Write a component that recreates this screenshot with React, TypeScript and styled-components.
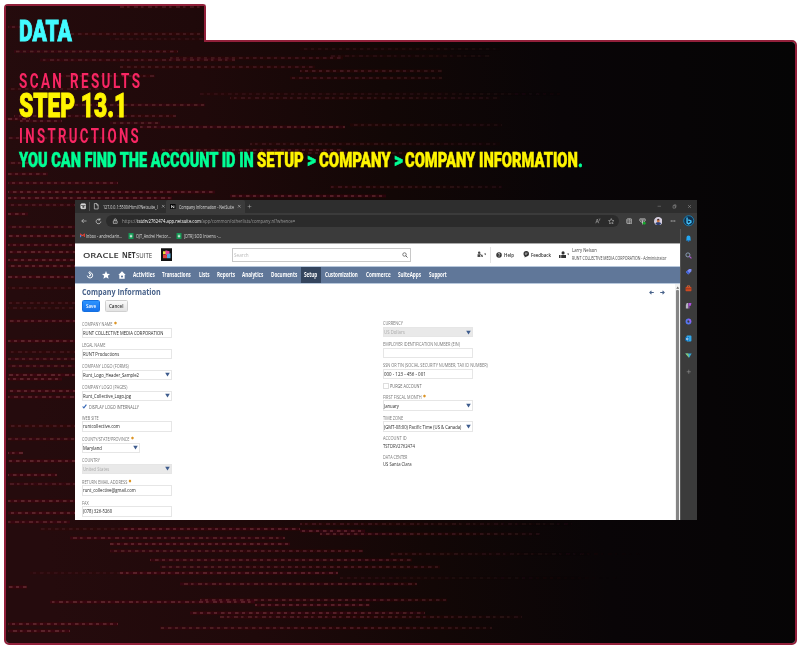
import React, { useLayoutEffect, useRef, useState } from "react";
import styled, { createGlobalStyle } from "styled-components";

const Global = createGlobalStyle`
  * { box-sizing: border-box; }
  body { margin: 0; background: #fff; width: 800px; height: 650px; overflow: hidden; }
`;

/* ---------- text squeezed to a given width ---------- */
const FitBox = styled.span<{ $w: number; $ml?: number }>`
  display: block;
  flex: none;
  width: ${(p) => p.$w}px;
  margin-left: ${(p) => p.$ml ?? 0}px;
  white-space: pre;
`;
const FitInner = styled.span`
  display: inline-block;
  transform-origin: 0 50%;
`;
function Fit({ w, ml, children }: { w: number; ml?: number; children: string }) {
  const ref = useRef<HTMLSpanElement>(null);
  const [scale, setScale] = useState(1);
  useLayoutEffect(() => {
    if (ref.current) setScale(w / ref.current.offsetWidth);
  }, [w, children]);
  return (
    <FitBox $w={w} $ml={ml}>
      <FitInner ref={ref} style={{ transform: `scaleX(${scale})` }}>{children}</FitInner>
    </FitBox>
  );
}

/* ---------- code-stream artwork ---------- */
type Streak = [y: number, x1: number, x2: number, strength: number];
const streaks: Streak[] = [
  [7, 120, 205, 0.6], [27, 8, 26, 0.7], [34, 70, 205, 0.6], [39, 110, 205, 0.3], [51.5, 14, 178, 0.7],
  [58, 170, 343, 0.6], [60, 40, 235, 0.7], [67, 120, 315, 0.6], [49, 300, 500, 0.3], [56, 330, 490, 0.35],
  [71, 300, 442, 0.7], [78, 290, 442, 0.6], [76, 60, 155, 0.7], [89, 8, 112, 0.5], [94, 200, 560, 0.35],
  [98, 230, 500, 0.5], [105, 60, 205, 0.8], [116, 14, 176, 0.7], [119, 6, 30, 1], [121, 20, 62, 0.9],
  [123, 110, 160, 0.8], [127, 140, 345, 0.9], [125, 350, 502, 0.5], [138, 8, 120, 0.7], [144, 250, 500, 0.5],
  [150, 160, 342, 0.8], [153, 190, 420, 0.5], [163, 8, 45, 0.8], [174, 8, 48, 0.9], [183, 8, 118, 0.9],
  [187, 330, 502, 0.6], [192, 8, 215, 1], [196, 230, 386, 1], [198, 8, 172, 1], [205, 8, 75, 0.7],
  [214, 8, 28, 1], [227, 8, 76, 0.8], [236, 8, 76, 1], [245, 8, 76, 0.9], [252, 8, 76, 1], [260, 8, 76, 1],
  [266, 8, 76, 1], [277, 8, 76, 1], [288, 8, 76, 0.5], [303, 8, 76, 0.5], [308, 8, 76, 0.4], [321, 8, 76, 0.9],
  [341, 8, 76, 1], [352, 8, 76, 0.5], [359, 8, 76, 0.8], [366, 8, 76, 0.8], [375, 8, 76, 1], [379, 8, 62, 1],
  [391, 8, 76, 1], [397, 8, 76, 0.9], [426, 8, 76, 0.6], [439, 8, 76, 0.8], [453, 8, 23, 1], [461, 8, 76, 1],
  [475, 8, 57, 1], [484, 8, 76, 0.7], [501, 8, 76, 1], [513, 8, 76, 1], [522, 8, 70, 0.9],
  [529, 120, 300, 1], [529, 40, 120, 0.4], [524, 300, 572, 0.6], [531, 300, 365, 1], [534, 320, 540, 0.9],
  [538, 70, 285, 0.9], [544, 110, 290, 1], [551, 110, 363, 0.8], [554, 390, 640, 0.6], [560, 150, 412, 0.9],
  [567, 160, 440, 0.8], [573, 120, 338, 1], [573, 30, 120, 0.3], [578, 340, 620, 0.3], [584, 180, 417, 0.9],
  [587, 8, 27, 1], [600, 200, 447, 0.9], [602, 50, 255, 1], [605, 255, 370, 1], [613, 190, 425, 1],
  [617, 220, 522, 0.8], [624, 8, 118, 1], [628, 160, 492, 0.8], [631, 8, 70, 1],
];
const ArtSvg = styled.svg`
  position: absolute;
  inset: 0;
  width: 100%;
  height: 100%;
  z-index: -1;
`;
function Artwork({ id, x, y, w, h }: { id: string; x: number; y: number; w: number; h: number }) {
  return (
    <ArtSvg viewBox={`${x} ${y} ${w} ${h}`} preserveAspectRatio="none" aria-hidden>
      <defs>
        <linearGradient id={`${id}bg`} gradientUnits="userSpaceOnUse" x1="0" y1="80" x2="790" y2="0">
          <stop offset="0" stopColor="#250b0d" />
          <stop offset="0.25" stopColor="#1f090a" />
          <stop offset="0.48" stopColor="#120706" />
          <stop offset="0.7" stopColor="#090507" />
          <stop offset="1" stopColor="#050505" />
        </linearGradient>
        <linearGradient id={`${id}dash`} gradientUnits="userSpaceOnUse" x1="0" y1="0" x2="700" y2="0">
          <stop offset="0" stopColor="#84444c" stopOpacity="0.58" />
          <stop offset="0.5" stopColor="#853c4a" stopOpacity="0.6" />
          <stop offset="0.72" stopColor="#6a383c" stopOpacity="0.36" />
          <stop offset="0.9" stopColor="#4c2026" stopOpacity="0.08" />
        </linearGradient>
        <linearGradient id={`${id}glow`} gradientUnits="userSpaceOnUse" x1="0" y1="0" x2="700" y2="0">
          <stop offset="0" stopColor="#560814" stopOpacity="0.45" />
          <stop offset="0.55" stopColor="#560814" stopOpacity="0.35" />
          <stop offset="0.85" stopColor="#3c0712" stopOpacity="0" />
        </linearGradient>
        <filter id={`${id}soft`} filterUnits="userSpaceOnUse" x="0" y="0" width="800" height="650">
          <feGaussianBlur stdDeviation="0.6" />
        </filter>
      </defs>
      <rect x="0" y="0" width="800" height="650" fill={`url(#${id}bg)`} />
      <g filter={`url(#${id}soft)`}>
        {streaks.map(([sy, x1, x2, o], i) => (
          <g key={i} opacity={o}>
            <rect x={x1} y={sy - 1.5} width={x2 - x1} height="3" fill={`url(#${id}glow)`} />
            <line x1={x1} x2={x2} y1={sy} y2={sy + 0.01} stroke={`url(#${id}dash)`} strokeWidth="1.6"
              strokeDasharray={i % 3 ? "3.5 3.5 3 4" : "4 3 2.5 4.5"} strokeDashoffset={i * 3} />
          </g>
        ))}
      </g>
    </ArtSvg>
  );
}

/* ---------- folder ---------- */
const Folder = styled.main`
  width: 793px;
  margin: 4px 0 0 4px;
`;
const FolderTab = styled.header`
  position: relative;
  z-index: 1;
  isolation: isolate;
  width: 202px;
  height: 38px;
  margin-bottom: -2px;
  padding: 11px 0 0 12.5px;
  border: 2px solid #92203a;
  border-bottom: 0;
  border-radius: 4px 3px 0 0;
`;
const FolderBody = styled.section`
  position: relative;
  isolation: isolate;
  overflow: hidden;
  height: 605px;
  padding: 28px 0 0 12.5px;
  border: 2px solid #92203a;
  border-radius: 0 5px 5px 5px;
`;
const Display = styled.div<{ $size: number; $h: number; $color: string; $weight?: number; $track?: number; $bold?: number }>`
  display: flex;
  height: ${(p) => p.$h}px;
  font: ${(p) => p.$weight ?? 900} ${(p) => p.$size}px/${(p) => p.$h}px Roboto, "Liberation Sans", sans-serif;
  letter-spacing: ${(p) => p.$track ?? 0}px;
  color: ${(p) => p.$color};
  -webkit-text-stroke: ${(p) => p.$bold ?? 0.5}px currentColor;
`;
const Yellow = styled.span`color: #fff500;`;

/* ---------- browser window ---------- */
const Window = styled.div`
  display: grid;
  grid-template: 13px 16px 13.5px 277.5px / 604.5px 17.5px;
  width: 622px;
  height: 320px;
  overflow: hidden;
  background: #3b3b3b;
  color: #ddd;
  font: 5.9px/8px "Open Sans", "Noto Sans", sans-serif;
`;
const Shot = styled.div`
  width: 622px;
  height: 320px;
  margin: 30px 0 0 56.5px;
  overflow: hidden;
`;
const Soft = styled.div`
  filter: blur(0.36px);
`;
const Strip = styled.div<{ $bg?: string; $wide?: boolean }>`
  display: flex;
  align-items: center;
  grid-column: ${(p) => (p.$wide ? "1 / 3" : "1")};
  background: ${(p) => p.$bg ?? "transparent"};
`;
const TitleBar = styled(Strip)`
  padding-right: 5.5px;
`;
const ActiveTab = styled.div`
  display: flex;
  align-items: center;
  width: 79px;
  height: 13px;
  margin-left: 1px;
  padding-left: 4px;
  border-radius: 2px 2px 0 0;
  background: #3b3b3b;
`;
const Pipe = styled.span`
  width: 1px;
  height: 9px;
  margin-left: 3px;
  background: #555;
`;
const Spacer = styled.span`flex: 1;`;
const Address = styled.div`
  display: flex;
  align-items: center;
  width: 513px;
  height: 12px;
  margin-left: 4px;
  padding: 0 5px 0 6px;
  border-radius: 6px;
  background: #2b2b2b;
  color: #9a9a9a;
`;
const Url = styled.div`
  display: flex;
  margin-left: 3px;
`;
const Bright = styled.span`color: #fff;`;
const IconSvg = styled.svg<{ $s: number; $ml?: number; $color?: string }>`
  flex: none;
  display: block;
  width: ${(p) => p.$s}px;
  height: ${(p) => p.$s}px;
  margin-left: ${(p) => p.$ml ?? 0}px;
  color: ${(p) => p.$color ?? "#ddd"};
  fill: none;
  stroke: currentColor;
  stroke-width: 2.4;
`;
const shapes: Record<string, React.ReactNode> = {
  tabs: <><rect x="3" y="3" width="18" height="18" rx="3" fill="currentColor" /><path d="M4 9h16" stroke="#222" /><rect x="9" y="12" width="7" height="5" fill="#222" stroke="none" /></>,
  doc: <path d="M5 2h9l5 5v15H5zM14 2v6h5" />,
  close: <path d="M5 5l14 14M19 5L5 19" />,
  plus: <path d="M12 3v18M3 12h18" />,
  minus: <path d="M3 12h18" />,
  restore: <path d="M5 8h11v12H5zM9 8V4h10v12h-3" />,
  netsuite: <><rect width="24" height="24" fill="#080808" stroke="none" /><path d="M7 18V6l10 12V6" stroke="#fff" strokeWidth="3" /></>,
  left: <path d="M22 12H3M11 4l-8 8 8 8" />,
  boldLeft: <path d="M23 12H5M12 4l-8 8 8 8" strokeWidth="5" />,
  boldRight: <path d="M1 12h18M12 4l8 8-8 8" strokeWidth="5" />,
  reload: <path d="M20 12a8 8 0 1 1-3-6.5M17 1v6h-6" />,
  lock: <><rect x="5" y="10" width="14" height="11" rx="2" /><path d="M8 10V7a4 4 0 0 1 8 0v3M12 14v3" /></>,
  read: <path d="M3 21l6-17 6 17M5 15h8M16 3q4 3 1 8M20 2v3" />,
  star: <path d="M12 2l3 7 7 .6-5.3 5L18.5 22 12 18l-6.5 4 1.8-7.4L2 9.6 9 9z" />,
  starFill: <path d="M12 0l3.5 8 8.5.9-6.3 5.7 2 8.9-7.7-4.6-7.700 4.600 2-8.900L0 8.900 8.500 8z" fill="currentColor" stroke="none" />,
  split: <><rect x="3" y="3" width="18" height="18" rx="3" /><path d="M12 3v18M15 8h4M15 15h4M5 8h4M5 15h4" /></>,
  heart: <><path d="M3 3h18v7l-6 4H9l-6-4zM7 7h10M12 8v14" /><circle cx="18" cy="18" r="5" fill="#16a52c" stroke="none" /></>,
  avatar: <><circle cx="12" cy="12" r="12" fill="#d5cfdf" stroke="none" /><path d="M4 20c0-8 16-8 16 0l-8 4z" fill="#2d3e73" stroke="none" /><circle cx="12" cy="11" r="4" fill="#d37a45" stroke="none" /><path d="M8 9q4-8 8 0z" fill="#42252a" stroke="none" /></>,
  dots: <path d="M3 12h4M10 12h4M17 12h4" strokeWidth="4" />,
  bing: <><circle cx="12" cy="12" r="10.5" fill="#102f4b" stroke="#1496d6" strokeWidth="1.5" /><path d="M8.5 5v11.500l3 2 5-3v-3L11 10" stroke="#45c6ff" strokeWidth="2.8" /></>,
  gmail: <><path d="M3 19V6l9 7 9-7v13" stroke="#e64335" strokeWidth="5" /><path d="M3 20V9" stroke="#4285f4" strokeWidth="5" /></>,
  sheet: <><rect x="2" y="0" width="20" height="24" rx="2" fill="#159a55" stroke="none" /><path d="M7 9h10M12 9v10M7 14h10" stroke="#fff" strokeWidth="2.5" /></>,
  search: <><circle cx="10" cy="10" r="7" /><path d="M15 15l7 7" strokeWidth="3" /></>,
  history: <path d="M4 14a8 8 0 1 0 8-9M13 1L8 5l5 5M13 9v5H9" strokeWidth="3" />,
  home: <><path d="M12 1L1 12h3v11h16V12h3z" fill="currentColor" stroke="none" /><rect x="9" y="14" width="6" height="5" fill="#607799" stroke="none" /></>,
  help: <><circle cx="12" cy="12" r="11" fill="currentColor" stroke="none" /><path d="M8.5 9c0-5 7-4 7 0 0 3-3.5 2-3.5 6M12 17v3" stroke="#fff" strokeWidth="2.5" /></>,
  feedback: <><circle cx="12" cy="10" r="10" fill="currentColor" stroke="none" /><path d="M6 16v8l8-5z" fill="currentColor" stroke="none" /><path d="M7 8h10M7 12h7" stroke="#fff" strokeWidth="2" /></>,
  role: <><circle cx="13" cy="6" r="5" fill="currentColor" stroke="none" /><path d="M7 22v-9h16v9zM0 22V13h5v9z" fill="currentColor" stroke="none" /></>,
  person: <><circle cx="8" cy="6" r="4.5" fill="currentColor" stroke="none" /><path d="M2 22V12h10v10z" fill="currentColor" stroke="none" /><path d="M12 10l9 12M21 14l-6 7" strokeWidth="3.5" /></>,
  caret: <path d="M1 4h22L12 21z" fill="currentColor" stroke="none" />,
  up: <path d="M2 19h20L12 4z" fill="currentColor" stroke="none" />,
  check: <path d="M3 12l6 7L21 3" strokeWidth="5.5" />,
  bell: <><path d="M5 15V9a7 7 0 0 1 14 0v6l2 4H3z" fill="#24a7f2" stroke="none" /><circle cx="12" cy="20" r="3" fill="#177bd0" stroke="none" /></>,
  find: <><circle cx="10" cy="10" r="7" stroke="#92a9c4" strokeWidth="3" /><path d="M15 15l7 7" stroke="#b45bd6" strokeWidth="4" /></>,
  tag: <><path d="M3 14L14 3h8v8L11 22z" fill="#7d8cf6" stroke="none" /><path d="M3 14l5-5 8 8-5 5z" fill="#3c60cf" stroke="none" /></>,
  tools: <><path d="M8 7V3h8v4" stroke="#e36b36" strokeWidth="3" /><rect x="2" y="7" width="20" height="14" rx="2" fill="#cf4a22" stroke="none" /><path d="M2 13h20" stroke="#822c19" /></>,
  games: <><path d="M3 22V10l3-7h5v19z" fill="#b3b3bd" stroke="none" /><path d="M12 3h10l-2 10h-5v9h-3z" fill="#b04fe0" stroke="none" /></>,
  office: <><circle cx="12" cy="12" r="7" stroke="#5777ef" strokeWidth="6" /><path d="M12 5a7 7 0 0 1 6 10" stroke="#9e5df0" strokeWidth="5" /></>,
  outlook: <><rect x="5" y="2" width="17" height="20" rx="3" fill="#2fa8ec" stroke="none" /><rect x="1" y="7" width="13" height="13" rx="2" fill="#0871c2" stroke="none" /><circle cx="8" cy="13.5" r="3" stroke="#fff" /></>,
  drop: <><path d="M1 5h22l-9 15z" fill="#32a9dd" stroke="none" /><path d="M1 5h10l3 15z" fill="#8cc56a" stroke="none" /></>,
};
function Icon({ name, s, ml, color }: { name: string; s: number; ml?: number; color?: string }) {
  return <IconSvg viewBox="0 0 24 24" $s={s} $ml={ml} $color={color}>{shapes[name]}</IconSvg>;
}

/* ---------- page inside the browser ---------- */
const Site = styled.div`
  grid-column: 1;
  display: flex;
  flex-direction: column;
  border-top: 1px solid #aaa;
  background: #fff;
  color: #333;
`;
const SiteHeader = styled.div`
  display: flex;
  align-items: center;
  height: 22px;
  padding-left: 8px;
`;
const Brand = styled.div`
  display: flex;
  color: #353535;
  font-size: 8px;
  line-height: 12px;
`;
const Oracle = styled.span`
  font-weight: 600;
  font-size: 7.8px;
`;
const Net = styled.span`font-weight: 700;`;
const LogoSvg = styled.svg`
  flex: none;
  width: 11px;
  height: 13.5px;
  margin-left: 9.5px;
`;
const Search = styled.div`
  display: flex;
  align-items: center;
  flex: none;
  width: 179px;
  height: 14px;
  margin-left: 59.5px;
  padding: 0 2px 0 1px;
  border: 1.5px solid #c8c8c8;
  color: #b9b9b9;
`;
const Divider = styled.span`
  width: 1px;
  height: 16px;
  margin-left: 4px;
  background: #e4e4e4;
`;
const HeaderLinks = styled.div`
  display: flex;
  align-items: center;
  font-weight: 600;
`;
const Account = styled.div`
  flex: none;
  margin-left: 3px;
  color: #444;
  font-weight: 400;
  line-height: 7.5px;
`;
const Nav = styled.nav`
  display: flex;
  align-items: center;
  height: 18px;
  padding-left: 11px;
  border: solid #b8c8dc;
  border-width: 1px 0;
  background: #607799;
  color: #fff;
  font-weight: 700;
  font-size: 6.2px;
`;
const Current = styled.div`
  display: flex;
  align-items: center;
  width: 20.5px;
  height: 16px;
  margin-left: 3.5px;
  padding-left: 3.5px;
  background: #34455e;
`;
const Main = styled.div`
  display: grid;
  grid-template-columns: 600px 4.5px;
  flex: 1;
  min-height: 0;
`;
const Sheet = styled.div`
  padding: 3.5px 0 0 6.5px;
  overflow: hidden;
`;
const TitleRow = styled.div`
  display: flex;
  align-items: center;
  height: 10px;
  color: #48628a;
  font: 700 9.2px/10px "Open Sans", sans-serif;
`;
const Buttons = styled.div`
  display: flex;
  gap: 5px;
  margin-top: 3px;
`;
const Button = styled.div<{ $w: number; $primary?: boolean }>`
  display: flex;
  align-items: center;
  justify-content: center;
  width: ${(p) => p.$w}px;
  height: 12px;
  border: 1px solid ${(p) => (p.$primary ? "#1470e0" : "#d0d0d0")};
  border-radius: 1.5px;
  background: ${(p) => (p.$primary ? "linear-gradient(#2d94ff, #1672ec)" : "linear-gradient(#fafafa, #e3e3e3)")};
  color: ${(p) => (p.$primary ? "#fff" : "#333")};
  font-weight: 600;
`;
const Columns = styled.div`
  display: grid;
  grid-template-columns: 301px 120px;
  margin-top: 7px;
`;
const Column = styled.div<{ $top: number }>`
  padding-top: ${(p) => p.$top}px;
`;
const FieldBox = styled.div<{ $h: number }>`
  height: ${(p) => p.$h}px;
`;
const Label = styled.div`
  display: flex;
  height: 7.5px;
  color: #777;
  font-size: 5.4px;
  line-height: 9px;
`;
const Required = styled.span`
  margin-left: 2.5px;
  color: #dc9424;
  font: 700 5px/8px "Liberation Sans", sans-serif;
  -webkit-text-stroke: 0.5px currentColor;
`;
const Input = styled.div<{ $w: number; $off?: boolean }>`
  display: flex;
  align-items: center;
  justify-content: space-between;
  width: ${(p) => p.$w}px;
  height: 10.5px;
  padding: 0 1px 0 0.5px;
  border: 1px solid #e6e6e6;
  background: ${(p) => (p.$off ? "#e9e9e9" : "#fff")};
  color: ${(p) => (p.$off ? "#aaa" : "#262626")};
`;
const CheckRow = styled.div<{ $h: number }>`
  display: flex;
  align-items: center;
  height: ${(p) => p.$h}px;
  padding-bottom: 1.5px;
  color: #666;
  font-size: 5.4px;
`;
const CheckBox = styled.span`
  width: 6px;
  height: 6px;
  margin-right: 1.5px;
  border: 1px solid #dedede;
`;
const Value = styled.div`
  color: #333;
  line-height: 9px;
`;
const Scroll = styled.div`
  display: flex;
  flex-direction: column;
  align-items: center;
  gap: 1px;
  padding-top: 2px;
  background: #f1f1f1;
`;
const Thumb = styled.span`
  flex: 1;
  width: 2.8px;
  border-radius: 1px 1px 0 0;
  background: #858585;
`;
const Rail = styled.aside`
  grid-area: 3 / 2 / 5 / 3;
  display: flex;
  flex-direction: column;
  align-items: center;
  gap: 9.7px;
  padding-top: 6px;
  border-left: 1px solid #555;
`;

type FieldProps = { label: string; lw: number; value?: string; vw?: number; h?: number; w?: number; req?: boolean; off?: boolean; select?: boolean };
function Field({ label, lw, value, vw, h = 21, w = 90.5, req, off, select }: FieldProps) {
  return (
    <FieldBox $h={h}>
      <Label><Fit w={lw}>{label}</Fit>{req && <Required>*</Required>}</Label>
      <Input $w={w} $off={off}>
        {value && vw ? <Fit w={vw}>{value}</Fit> : null}
        {select && <Icon name="caret" s={5} color="#3e5c8d" />}
      </Input>
    </FieldBox>
  );
}

export default function App() {
  return (
    <>
      <Global />
      <Folder>
        <FolderTab>
          <Artwork id="t" x={6} y={6} w={198} h={36} />
          <Display $size={29} $h={29} $color="#43fbff" $bold={0.9}><Fit w={53}>DATA</Fit></Display>
        </FolderTab>
        <FolderBody>
          <Artwork id="b" x={6} y={42} w={789} h={601} />
          <Display $size={20.3} $h={22} $color="#f82663" $weight={700} $track={3.6} $bold={0}><Fit w={123.5} ml={0.5}>SCAN RESULTS</Fit></Display>
          <Display $size={33.5} $h={28} $color="#fff500" $bold={0.9}><Fit w={108}>STEP 13.1</Fit></Display>
          <Display $size={20.3} $h={32} $color="#f82663" $weight={700} $track={3.6} $bold={0}><Fit w={122} ml={0.5}>INSTRUCTIONS</Fit></Display>
          <Display $size={19.3} $h={18} $color="#00ff95">
            <Fit w={234.5}>YOU CAN FIND THE ACCOUNT ID IN</Fit>
            <Yellow><Fit w={47} ml={4}>SETUP</Fit></Yellow>
            <Fit w={9} ml={3}>&gt;</Fit>
            <Yellow><Fit w={71.5} ml={2.5}>COMPANY</Fit></Yellow>
            <Fit w={9} ml={3.5}>&gt;</Fit>
            <Yellow><Fit w={173} ml={2}>COMPANY INFORMATION</Fit></Yellow>
            <Fit w={5}>.</Fit>
          </Display>
          <Shot>
            <Soft>
              <Window>
                <TitleBar $wide $bg="#2e2e2e">
                  <Icon name="tabs" s={6.5} ml={4.5} /><Pipe /><Icon name="doc" s={6.5} ml={3} />
                  <Fit w={55} ml={3}>127.0.0.1:5500/Html/?Netsuite_I</Fit>
                  <Icon name="close" s={4.5} ml={3} />
                  <ActiveTab>
                    <Icon name="netsuite" s={5.5} /><Fit w={55} ml={3.5}>Company Information - NetSuite</Fit>
                    <Icon name="close" s={4.5} ml={3} />
                  </ActiveTab>
                  <Icon name="plus" s={5} ml={2} color="#aaa" />
                  <Spacer />
                  <Icon name="minus" s={4.5} color="#999" /><Icon name="restore" s={5} ml={10} color="#999" />
                  <Icon name="close" s={5} ml={10} color="#999" />
                </TitleBar>
                <Strip $wide>
                  <Icon name="left" s={6} ml={6} /><Icon name="reload" s={7} ml={8} />
                  <Address>
                    <Icon name="lock" s={6.5} />
                    <Url>
                      <Fit w={15}>https://</Fit>
                      <Bright><Fit w={64}>tstdrv2762474.app.netsuite.com</Fit></Bright>
                      <Fit w={94}>/app/common/otherlists/company.nl?whence=</Fit>
                    </Url>
                    <Spacer />
                    <Icon name="read" s={6} color="#aaa" /><Icon name="star" s={6.5} ml={7} color="#aaa" />
                  </Address>
                  <Icon name="split" s={6.5} ml={6.5} /><Icon name="heart" s={7} ml={7} /><Icon name="avatar" s={8.5} ml={7.5} />
                  <Icon name="dots" s={6} ml={8} /><Icon name="bing" s={11.5} ml={7} />
                </Strip>
                <Strip>
                  <Icon name="gmail" s={5} ml={4.5} /><Fit w={36} ml={1.5}>Inbox - andreclarin...</Fit>
                  <Icon name="sheet" s={6} ml={5.5} /><Fit w={35} ml={2}>OJT_Andrei Hector...</Fit>
                  <Icon name="sheet" s={6} ml={5} /><Fit w={37} ml={2}>[DTR] SOD Interns -...</Fit>
                </Strip>
                <Site>
                  <SiteHeader>
                    <Brand><Oracle><Fit w={36}>ORACLE</Fit></Oracle><Net><Fit w={14} ml={2.5}>NET</Fit></Net><Fit w={16}>SUITE</Fit></Brand>
                    <LogoSvg viewBox="0 0 11 13">
                      <path d="M0 0h11v13H0z" fill="#111" />
                      <path d="M2 3h3v3H2z" fill="#e7df38" /><path d="M4.5 2l4 1v3l-4 1z" fill="#e94399" />
                      <path d="M2 6l4 1v3H2z" fill="#df423f" /><path d="M6 6l3.5-1v5H6z" fill="#4fa7dd" />
                    </LogoSvg>
                    <Search><Fit w={15}>Search</Fit><Spacer /><Icon name="search" s={6} color="#333" /></Search>
                    <HeaderLinks>
                      <Icon name="person" s={6.5} ml={66} color="#444" /><Icon name="caret" s={2.5} ml={0.5} color="#444" />
                      <Divider />
                      <Icon name="help" s={6} ml={5} color="#333" /><Fit w={10} ml={1.5}>Help</Fit>
                      <Icon name="feedback" s={6.5} ml={9.5} color="#333" /><Fit w={20} ml={1.5}>Feedback</Fit>
                      <Icon name="role" s={7.5} ml={7.5} color="#333" /><Icon name="caret" s={2.5} ml={0.5} color="#444" />
                      <Account><Fit w={25}>Larry Nelson</Fit><Fit w={94.5}>RUNT COLLECTIVE MEDIA CORPORATION - Administrator</Fit></Account>
                    </HeaderLinks>
                  </SiteHeader>
                  <Nav>
                    <Icon name="history" s={8} color="#fff" /><Icon name="starFill" s={8} ml={8} color="#fff" /><Icon name="home" s={8} ml={7.5} color="#fff" />
                    <Fit w={22} ml={7}>Activities</Fit><Fit w={29} ml={7}>Transactions</Fit><Fit w={10.5} ml={8}>Lists</Fit>
                    <Fit w={18} ml={7.5}>Reports</Fit><Fit w={21} ml={7.5}>Analytics</Fit><Fit w={26} ml={8}>Documents</Fit>
                    <Current><Fit w={13.5}>Setup</Fit></Current>
                    <Fit w={33} ml={4}>Customization</Fit><Fit w={24.5} ml={8}>Commerce</Fit>
                    <Fit w={23} ml={7.5}>SuiteApps</Fit><Fit w={18} ml={7.5}>Support</Fit>
                  </Nav>
                  <Main>
                    <Sheet>
                      <TitleRow>
                        <Fit w={78.5}>Company Information</Fit>
                        <Icon name="boldLeft" s={5} ml={489} color="#48628a" /><Icon name="boldRight" s={5} ml={6} color="#48628a" />
                      </TitleRow>
                      <Buttons><Button $w={18.5} $primary><Fit w={10}>Save</Fit></Button><Button $w={23}><Fit w={14.5}>Cancel</Fit></Button></Buttons>
                      <Columns>
                        <Column $top={1}>
                          <Field label="COMPANY NAME" lw={30.5} req value="RUNT COLLECTIVE MEDIA CORPORATION" vw={80.5} />
                          <Field label="LEGAL NAME" lw={23.5} value="RUNT Productions" vw={36} />
                          <Field label="COMPANY LOGO (FORMS)" lw={46.5} value="Runt_Logo_Header_Sample2" vw={56} select />
                          <Field label="COMPANY LOGO (PAGES)" lw={45.5} value="Runt_Collective_Logo.jpg" vw={48.5} h={18.5} select />
                          <CheckRow $h={12}><Icon name="check" s={5} ml={0.5} color="#3566b5" /><Fit w={50} ml={2}>DISPLAY LOGO INTERNALLY</Fit></CheckRow>
                          <Field label="WEB SITE" lw={16.5} value="runtcollective.com" vw={36.5} h={21.5} />
                          <Field label="COUNTY/STATE/PROVINCE" lw={47.5} req value="Maryland" vw={19} w={58.5} select />
                          <Field label="COUNTRY" lw={18} value="United States" vw={26.5} off select h={21.5} />
                          <Field label="RETURN EMAIL ADDRESS" lw={45} req value="runt_collective@gmail.com" vw={52.5} />
                          <Field label="FAX" lw={6.5} value="(078) 326-5260" vw={29.5} />
                        </Column>
                        <Column $top={0.3}>
                          <Field label="CURRENCY" lw={19.5} value="US Dollars" vw={20.5} off select />
                          <Field label="EMPLOYER IDENTIFICATION NUMBER (EIN)" lw={77} />
                          <Field label="SSN OR TIN (SOCIAL SECURITY NUMBER, TAX ID NUMBER)" lw={104.5} value="000 - 123 - 456 - 001" vw={41.5} h={19} />
                          <CheckRow $h={12.5}><CheckBox /><Fit w={31.5}>PURGE ACCOUNT</Fit></CheckRow>
                          <Field label="FIRST FISCAL MONTH" lw={38.5} req value="January" vw={15} select />
                          <Field label="TIME ZONE" lw={20} value="(GMT-08:00) Pacific Time (US & Canada)" vw={77.5} select h={20.5} />
                          <FieldBox $h={18.5}><Label><Fit w={23.5}>ACCOUNT ID</Fit></Label><Value><Fit w={32}>TSTDRV2762474</Fit></Value></FieldBox>
                          <FieldBox $h={18.5}><Label><Fit w={24.5}>DATA CENTER</Fit></Label><Value><Fit w={28.5}>US Santa Clara</Fit></Value></FieldBox>
                        </Column>
                      </Columns>
                    </Sheet>
                    <Scroll><Icon name="up" s={3.5} color="#666" /><Thumb /></Scroll>
                  </Main>
                </Site>
                <Rail>
                  {["bell", "find", "tag", "tools", "games", "office", "outlook", "drop"].map((n) => <Icon key={n} name={n} s={7} />)}
                  <Icon name="plus" s={5.5} color="#999" />
                </Rail>
              </Window>
            </Soft>
          </Shot>
        </FolderBody>
      </Folder>
    </>
  );
}
